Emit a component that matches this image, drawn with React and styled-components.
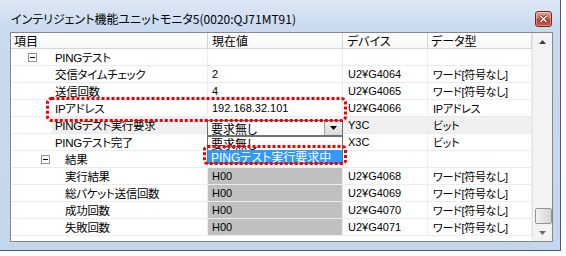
import React from 'react';
import styled, { createGlobalStyle } from 'styled-components';

const GlobalStyle = createGlobalStyle`
  html, body {
    margin: 0;
    padding: 0;
    background: #fff;
  }
  body {
    font-family: "Liberation Sans", "Noto Sans CJK JP", sans-serif;
    font-feature-settings: "palt";
    color: #000;
  }
`;

const Page = styled.div`
  position: relative;
  width: 566px;
  height: 256px;
  overflow: hidden;
`;

const Window = styled.div`
  box-sizing: border-box;
  width: 561px;
  height: 251px;
  padding: 0 7px 8px 10px;
  display: flex;
  flex-direction: column;
  background: linear-gradient(#dde8f5, #c9daef 30px, #c4d6ec);
  border-right: 1px solid #42597a;
  border-bottom: 1px solid #42597a;
`;

const TitleBar = styled.div`
  box-sizing: border-box;
  height: 32px;
  padding: 5px 1px 0 1px;
  display: flex;
  align-items: center;
  justify-content: space-between;
`;

const Title = styled.span`
  font-family: "Noto Sans CJK JP", sans-serif;
  font-size: 12px;
  color: #000;
`;

const CloseButton = styled.div`
  box-sizing: border-box;
  width: 17px;
  height: 16px;
  border: 1px solid #6d2a20;
  border-radius: 3px;
  display: flex;
  align-items: center;
  justify-content: center;
  background: linear-gradient(#e7a496, #cf6a56 45%, #b94430 55%, #c7563f);
  box-shadow: inset 0 0 0 1px rgba(255, 255, 255, 0.35);
`;

const Panel = styled.div`
  box-sizing: border-box;
  height: 210px;
  border: 1px solid #828790;
  background: #fff;
  display: flex;
`;

const Grid = styled.div`
  width: 521px;
  display: flex;
  flex-direction: column;
`;

const cols = '197px 135px 85px 104px';

const HeaderRow = styled.div`
  display: grid;
  grid-template-columns: ${cols};
  height: 16px;
`;

const HeaderCell = styled.div`
  box-sizing: border-box;
  height: 16px;
  padding-left: ${(p) => p.$pad}px;
  display: flex;
  align-items: center;
  font-family: "Noto Sans CJK JP", sans-serif;
  font-size: 12px;
  background: linear-gradient(#ffffff, #f7f8f9);
  border-right: 1px solid #d5d5d5;
  border-bottom: 1px solid #d5d5d5;
`;

const Row = styled.div`
  display: grid;
  grid-template-columns: ${cols};
  height: 17px;
`;

const Cell = styled.div`
  box-sizing: border-box;
  position: relative;
  height: 17px;
  padding-left: ${(p) => p.$pad || 0}px;
  display: flex;
  align-items: center;
  white-space: nowrap;
  font-size: ${(p) => p.$size || 11.5}px;
  letter-spacing: ${(p) => (p.$tight ? '-0.3px' : '0')};
  background: ${(p) => (p.$gray ? '#c0c0c0' : p.$sel ? '#f0f0f0' : 'transparent')};
  border-right: 1px solid #ececec;
  border-bottom: 1px solid #ececec;
`;

const LabelCell = styled(Cell)`
  padding-left: 0;
`;

const Gutter = styled.span`
  flex: none;
  width: ${(p) => p.$w}px;
  height: 100%;
  display: flex;
  align-items: center;
`;

const Toggle = styled.span`
  box-sizing: border-box;
  width: 9px;
  height: 9px;
  margin-left: ${(p) => p.$x}px;
  border: 1px solid #919191;
  background: #fff;
  display: flex;
  align-items: center;
  justify-content: center;
  &::after {
    content: '';
    width: 5px;
    height: 1px;
    background: #000;
  }
`;

const LabelText = styled.span`
  flex: 1;
  height: 100%;
  padding-left: 3px;
  display: flex;
  align-items: center;
  background: ${(p) => (p.$sel ? '#f0f0f0' : 'transparent')};
`;

const Combo = styled.div`
  box-sizing: border-box;
  position: absolute;
  left: -1px;
  top: 3px;
  width: 136px;
  height: 16px;
  border: 1px solid #707070;
  background: #fff;
  display: flex;
  align-items: center;
  z-index: 2;
`;

const ComboText = styled.span`
  flex: 1;
  padding-left: 3px;
  font-size: 12px;
`;

const ComboButton = styled.span`
  box-sizing: border-box;
  width: 18px;
  height: 14px;
  background: linear-gradient(#f2f2f2, #d9d9d9);
  border-left: 1px solid #a0a0a0;
  display: flex;
  align-items: center;
  justify-content: center;
`;

const DropList = styled.div`
  box-sizing: border-box;
  position: absolute;
  left: -1px;
  top: 19px;
  width: 136px;
  height: 28px;
  border: 1px solid #707070;
  background: #fff;
  display: flex;
  flex-direction: column;
  z-index: 2;
`;

const ListItem = styled.div`
  height: 13px;
  padding-left: 3px;
  display: flex;
  align-items: center;
  font-size: 12px;
  color: ${(p) => (p.$active ? '#fff' : '#000')};
  background: ${(p) => (p.$active ? '#3399ff' : 'transparent')};
`;

const Scrollbar = styled.div`
  box-sizing: border-box;
  width: 20px;
  display: flex;
  flex-direction: column;
  background: #f3f3f3;
  border-left: 1px solid #e6e6e6;
`;

const ArrowButton = styled.div`
  height: 17px;
  display: flex;
  align-items: center;
  justify-content: center;
`;

const Track = styled.div`
  flex: 1;
  display: flex;
  flex-direction: column;
  justify-content: flex-end;
`;

const Thumb = styled.div`
  box-sizing: border-box;
  height: 16px;
  margin-left: 2px;
  width: 17px;
  border: 1px solid #959595;
  border-radius: 2px;
  background: linear-gradient(90deg, #f4f4f4, #e3e3e3 50%, #d4d4d4);
`;

const Annotation = styled.svg`
  position: absolute;
  left: 0;
  top: 0;
  pointer-events: none;
  z-index: 5;
`;

const rows = [
  { label: 'PINGテスト', gutter: 41, toggle: 17 },
  { label: '交信タイムチェック', gutter: 41, value: '2', device: 'U2¥G4064', type: 'ワード[符号なし]' },
  { label: '送信回数', gutter: 41, value: '4', device: 'U2¥G4065', type: 'ワード[符号なし]' },
  { label: 'IPアドレス', gutter: 41, value: '192.168.32.101', device: 'U2¥G4066', type: 'IPアドレス' },
  { label: 'PINGテスト実行要求', gutter: 41, combo: '要求無し', device: 'Y3C', type: 'ビット', selected: true },
  { label: 'PINGテスト完了', gutter: 41, device: 'X3C', type: 'ビット' },
  { label: '結果', gutter: 51, toggle: 30 },
  { label: '実行結果', gutter: 51, gray: 'H00', device: 'U2¥G4068', type: 'ワード[符号なし]' },
  { label: '総パケット送信回数', gutter: 51, gray: 'H00', device: 'U2¥G4069', type: 'ワード[符号なし]' },
  { label: '成功回数', gutter: 51, gray: 'H00', device: 'U2¥G4070', type: 'ワード[符号なし]' },
  { label: '失敗回数', gutter: 51, gray: 'H00', device: 'U2¥G4071', type: 'ワード[符号なし]' },
];

const Triangle = ({ down, color = '#3f3f3f' }) => (
  <svg width="7" height="4" viewBox="0 0 7 4">
    <path d={down ? 'M0 0H7L3.5 4Z' : 'M0 4H7L3.5 0Z'} fill={color} />
  </svg>
);

const ValueCell = ({ row }) => {
  if (row.combo) {
    return (
      <Cell $pad={4} $size={11}>
        <Combo>
          <ComboText>{row.combo}</ComboText>
          <ComboButton>
            <Triangle down color="#000" />
          </ComboButton>
        </Combo>
        <DropList>
          <ListItem>要求無し</ListItem>
          <ListItem $active>PINGテスト実行要求中</ListItem>
        </DropList>
      </Cell>
    );
  }
  if (row.gray) {
    return (
      <Cell $pad={4} $size={11} $gray>
        {row.gray}
      </Cell>
    );
  }
  return (
    <Cell $pad={4} $size={11}>
      {row.value}
    </Cell>
  );
};

export default function App() {
  return (
    <Page>
      <GlobalStyle />
      <Window>
        <TitleBar>
          <Title>インテリジェント機能ユニットモニタ5(0020:QJ71MT91)</Title>
          <CloseButton>
            <svg width="9" height="8" viewBox="0 0 9 8">
              <path d="M1.5 1L7.5 7M7.5 1L1.5 7" stroke="#5a1f16" strokeWidth="3" />
              <path d="M1.5 1L7.5 7M7.5 1L1.5 7" stroke="#fff" strokeWidth="1.6" />
            </svg>
          </CloseButton>
        </TitleBar>
        <Panel>
          <Grid>
            <HeaderRow>
              <HeaderCell $pad={3}>項目</HeaderCell>
              <HeaderCell $pad={4}>現在値</HeaderCell>
              <HeaderCell $pad={4}>デバイス</HeaderCell>
              <HeaderCell $pad={3}>データ型</HeaderCell>
            </HeaderRow>
            {rows.map((row) => (
              <Row key={row.label}>
                <LabelCell $tight>
                  <Gutter $w={row.gutter}>{row.toggle && <Toggle $x={row.toggle} />}</Gutter>
                  <LabelText $sel={row.selected}>{row.label}</LabelText>
                </LabelCell>
                <ValueCell row={row} />
                <Cell $pad={5} $size={11} $sel={row.selected}>
                  {row.device}
                </Cell>
                <Cell $pad={5} $size={11} $tight $sel={row.selected}>
                  {row.type}
                </Cell>
              </Row>
            ))}
          </Grid>
          <Scrollbar>
            <ArrowButton>
              <Triangle />
            </ArrowButton>
            <Track>
              <Thumb />
            </Track>
            <ArrowButton>
              <Triangle down color="#6a6a6a" />
            </ArrowButton>
          </Scrollbar>
        </Panel>
      </Window>
      <Annotation width="566" height="256">
        <rect x="47.5" y="98.5" width="298" height="22" rx="4" fill="none" stroke="#f00000" strokeWidth="3" strokeDasharray="3 2" />
        <rect x="204.5" y="146.5" width="141" height="17" rx="3" fill="none" stroke="#f00000" strokeWidth="3" strokeDasharray="3 2" />
      </Annotation>
    </Page>
  );
}
